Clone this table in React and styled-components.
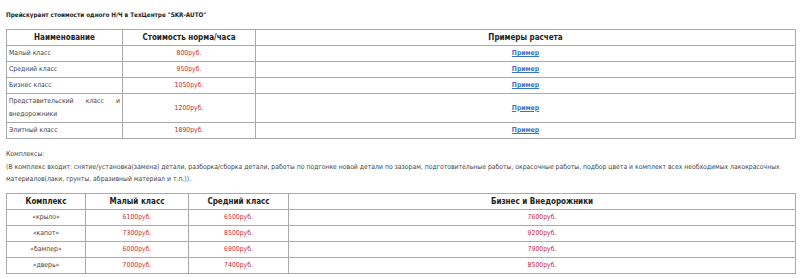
import React from 'react';
import styled, { createGlobalStyle } from 'styled-components';

const GlobalStyle = createGlobalStyle`
  body {
    margin: 0;
    background: #fff;
    font-family: "DejaVu Sans Condensed", "DejaVu Sans", Verdana, sans-serif;
    font-stretch: condensed;
    font-size: 6.8px;
    color: #444;
  }
`;

const Page = styled.div`
  padding: 9px 4px 0 6px;
`;

const Title = styled.h4`
  margin: 0 0 9px;
  font-size: 6.3px;
  line-height: 11px;
  font-weight: bold;
  color: #222;
`;

const PriceTable = styled.table`
  width: 790px;
  border-collapse: collapse;
  table-layout: fixed;
`;

const Th = styled.th`
  border: 1px solid #aaa;
  padding: 1px 2px;
  height: 13px;
  line-height: 13px;
  font-size: 8px;
  font-weight: bold;
  color: #222;
  text-align: center;
`;

const Td = styled.td`
  border: 1px solid #aaa;
  padding: 1px 2px;
  line-height: 13px;
  color: ${(p) => (p.$price ? '#c42a36' : '#444')};
  text-align: ${(p) => (p.$center ? 'center' : p.$justify ? 'justify' : 'left')};
`;

const ExampleLink = styled.a`
  color: #3b73c4;
  font-weight: bold;
  text-decoration: underline;
`;

const Note = styled.div`
  margin: 9px 0 7px;
  line-height: 12.5px;
  color: #444;
`;

const classes = [
  { name: 'Малый класс', price: '800руб.' },
  { name: 'Средний класс', price: '950руб.' },
  { name: 'Бизнес класс', price: '1050руб.' },
  { name: 'Представительский класс и внедорожники', price: '1200руб.', justify: true },
  { name: 'Элитный класс', price: '1890руб.' },
];

const complexes = [
  { name: '«крыло»', small: '6100руб.', mid: '6500руб.', big: '7600руб.' },
  { name: '«капот»', small: '7300руб.', mid: '8500руб.', big: '9200руб.' },
  { name: '«бампер»', small: '6000руб.', mid: '6900руб.', big: '7900руб.' },
  { name: '«дверь»', small: '7000руб.', mid: '7400руб.', big: '8500руб.' },
];

const App = () => {
  return (
    <Page>
      <GlobalStyle />
      <Title>Прейскурант стоимости одного Н/Ч в ТехЦентре "SKR-AUTO"</Title>

      <PriceTable>
        <colgroup>
          <col style={{ width: 116 }} />
          <col style={{ width: 133 }} />
          <col />
        </colgroup>
        <thead>
          <tr>
            <Th>Наименование</Th>
            <Th>Стоимость норма/часа</Th>
            <Th>Примеры расчета</Th>
          </tr>
        </thead>
        <tbody>
          {classes.map((c) => (
            <tr key={c.name}>
              <Td $justify={c.justify}>{c.name}</Td>
              <Td $center $price>{c.price}</Td>
              <Td $center>
                <ExampleLink href="#">Пример</ExampleLink>
              </Td>
            </tr>
          ))}
        </tbody>
      </PriceTable>

      <Note>
        Комплексы:
        <br />
        (В комплекс входит: снятие/установка(замена) детали, разборка/сборка детали, работы по подгонке новой детали по зазорам, подготовительные работы, окрасочные работы, подбор цвета и комплект всех необходимых лакокрасочных материалов(лаки, грунты, абразивный материал и т.п.)).
      </Note>

      <PriceTable>
        <colgroup>
          <col style={{ width: 79 }} />
          <col style={{ width: 103 }} />
          <col style={{ width: 100 }} />
          <col />
        </colgroup>
        <thead>
          <tr>
            <Th>Комплекс</Th>
            <Th>Малый класс</Th>
            <Th>Средний класс</Th>
            <Th>Бизнес и Внедорожники</Th>
          </tr>
        </thead>
        <tbody>
          {complexes.map((c) => (
            <tr key={c.name}>
              <Td $center>{c.name}</Td>
              <Td $center $price>{c.small}</Td>
              <Td $center $price>{c.mid}</Td>
              <Td $center $price>{c.big}</Td>
            </tr>
          ))}
        </tbody>
      </PriceTable>
    </Page>
  );
};

export default App;
